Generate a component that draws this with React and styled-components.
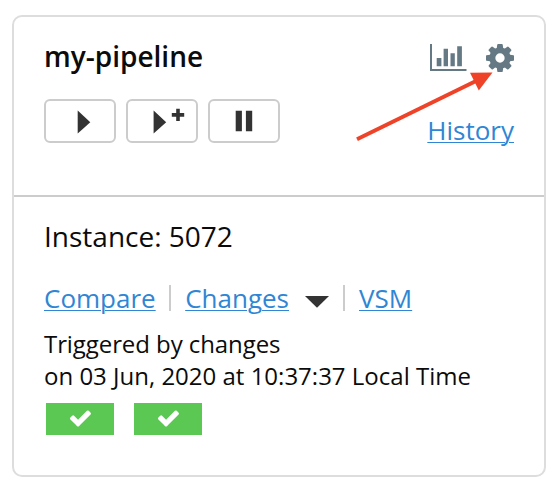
import React from "react";
import styled, { createGlobalStyle } from "styled-components";

const GlobalStyle = createGlobalStyle`
  * { box-sizing: border-box; }
  body {
    margin: 0;
    background: #fff;
    color: #0b0b0b;
    font-family: "Open Sans", "Noto Sans", sans-serif;
  }
`;

const Page = styled.main`
  position: relative;
  width: 560px;
  height: 492px;
  padding: 15px 0 0 12px;
`;

const Card = styled.article`
  width: 534px;
  height: 462px;
  border: 2px solid #ddd;
  border-radius: 10px;
  background: #fff;
`;

const Header = styled.header`
  display: flex;
  justify-content: space-between;
  height: 180px;
  padding: 21px 30px 0;
  border-bottom: 2px solid #ccc;
`;

const HeaderLeft = styled.div`
  display: flex;
  flex-direction: column;
  gap: 25px;
`;

const HeaderRight = styled.div`
  display: flex;
  flex-direction: column;
  align-items: flex-end;
`;

const Title = styled.h1`
  margin: 0;
  font-size: 28px;
  font-weight: 600;
  line-height: 36px;
  white-space: nowrap;
`;

const Controls = styled.div`
  display: flex;
  gap: 10px;
`;

const ControlButton = styled.button`
  display: block;
  width: 72px;
  height: 44px;
  padding: 0;
  border: 2px solid #ccc;
  border-radius: 6px;
  background: #fff;

  svg {
    display: block;
    fill: #333;
  }
`;

const Tools = styled.div`
  display: flex;
  gap: 19px;
  height: 74px;
  padding-top: 6px;
  fill: #647984;
`;

const Link = styled.a`
  color: #2f86d4;
  font-size: 26px;
  line-height: 36px;
  text-decoration: underline;
  text-decoration-thickness: 1px;
  text-underline-offset: 2px;
  white-space: nowrap;
`;

const Body = styled.section`
  padding: 21px 30px 0;
`;

const Instance = styled.div`
  height: 62px;
  font-size: 28px;
  line-height: 36px;
`;

const LinkRow = styled.nav`
  display: flex;
  align-items: center;
  height: 36px;
`;

const Separator = styled.span`
  width: 2px;
  height: 26px;
  margin: 0 14px 0 13.5px;
  background: #ccc;
`;

const Caret = styled.svg`
  margin: 7px 1px 0 15.5px;
  fill: #333;
`;

const Trigger = styled.p`
  margin: 12px 0 11px;
  font-size: 24px;
  line-height: 32px;
  white-space: nowrap;
`;

const TriggerCause = styled.span`
  letter-spacing: -0.08px;
`;

const Stages = styled.div`
  display: flex;
  gap: 20px;
  padding-left: 2px;
`;

const Stage = styled.div`
  width: 68px;
  height: 32px;
  padding: 7px 0 0 24px;
  background: #5bc853;

  svg {
    display: block;
    fill: #fff;
  }
`;

const Arrow = styled.svg`
  position: absolute;
  left: 350px;
  top: 65px;
  pointer-events: none;
`;

const ChartIcon = () => (
  <svg width="37" height="28" viewBox="0 0 37 28">
    <path d="M0 0h2v25h34.500v2H0zM6.700 14h4.700v8.300H6.700zM13.600 4.700h4.400v17.600h-4.400zM20.500 9.300h4.300v13h-4.300zM27.200 2.300h4.700v20h-4.700z" />
  </svg>
);

const GearIcon = () => (
  <svg width="28" height="28" viewBox="128 128 1536 1536">
    <path d="M1152 896q0-106-75-181t-181-75-181 75-75 181 75 181 181 75 181-75 75-181zm512-109v222q0 12-8 23t-20 13l-185 28q-19 54-39 91 35 50 107 138 10 12 10 25t-9 23q-27 37-99 108t-94 71q-12 0-26-9l-138-108q-44 23-91 38-16 136-29 186-7 28-36 28h-222q-14 0-24.500-8.500t-11.500-21.500l-28-184q-49-16-90-37l-141 107q-10 9-25 9-14 0-25-11-126-114-165-168-7-10-7-23 0-12 8-23 15-21 51-66.500t54-70.500q-27-50-41-99l-183-27q-13-2-21-12.500t-8-23.500v-222q0-12 8-23t19-13l186-28q14-46 39-92-40-57-107-138-10-12-10-24 0-10 9-23 26-36 98.500-107.500t94.500-71.500q13 0 26 10l138 107q44-23 91-38 16-136 29-186 7-28 36-28h222q14 0 24.500 8.500t11.500 21.500l28 184q49 16 90 37l142-107q9-9 24-9 13 0 25 10 129 119 165 170 7 8 7 22 0 12-8 23-15 21-51 66.500t-54 70.500q26 50 41 98l183 28q13 2 21 12.500t8 23.500z" />
  </svg>
);

const CheckIcon = () => (
  <svg width="21" height="17" viewBox="121 334 1550 1188">
    <path d="M1671 566q0 40-28 68l-724 724-136 136q-28 28-68 28t-68-28l-136-136-362-362q-28-28-28-68t28-68l136-136q28-28 68-28t68 28l294 295 656-657q28-28 68-28t68 28l136 136q28 28 28 68z" />
  </svg>
);

const controls = [
  { label: "Trigger", path: "M31.700 9.500L44.300 21.200L31.700 32.500z" },
  {
    label: "Trigger with options",
    path: "M25.600 9.500L38.200 21.200L25.600 32.500zM48.200 7.700h3.600v4.400h4.400v3.600h-4.400v4.400h-3.600v-4.400h-4.400v-3.600h4.400z",
  },
  { label: "Pause", path: "M25.700 9.700h6.200v20.600h-6.200zM35.900 9.700h6.300v20.600h-6.300z" },
];

export default function App() {
  return (
    <>
      <GlobalStyle />
      <Page>
        <Card>
          <Header>
            <HeaderLeft>
              <Title>my-pipeline</Title>
              <Controls>
                {controls.map(({ label, path }) => (
                  <ControlButton key={label} aria-label={label}>
                    <svg width="68" height="40" viewBox="0 0 68 40">
                      <path d={path} />
                    </svg>
                  </ControlButton>
                ))}
              </Controls>
            </HeaderLeft>
            <HeaderRight>
              <Tools>
                <ChartIcon />
                <GearIcon />
              </Tools>
              <Link>History</Link>
            </HeaderRight>
          </Header>
          <Body>
            <Instance>Instance: 5072</Instance>
            <LinkRow>
              <Link>Compare</Link>
              <Separator />
              <Link>Changes</Link>
              <Caret width="24" height="12" viewBox="0 0 24 12">
                <path d="M0 0h24L12 11.700z" />
              </Caret>
              <Separator />
              <Link>VSM</Link>
            </LinkRow>
            <Trigger>
              <TriggerCause>Triggered by changes</TriggerCause>
              <br />
              on 03 Jun, 2020 at 10:37:37 Local Time
            </Trigger>
            <Stages>
              <Stage><CheckIcon /></Stage>
              <Stage><CheckIcon /></Stage>
            </Stages>
          </Body>
        </Card>
        <Arrow width="150" height="85" viewBox="350 65 150 85">
          <path d="M357 139.300L477 80.500" fill="none" stroke="#ee4328" strokeWidth="4" />
          <path d="M470 72.700L492.500 72.500L478.800 90.500z" fill="#ee4328" />
        </Arrow>
      </Page>
    </>
  );
}
